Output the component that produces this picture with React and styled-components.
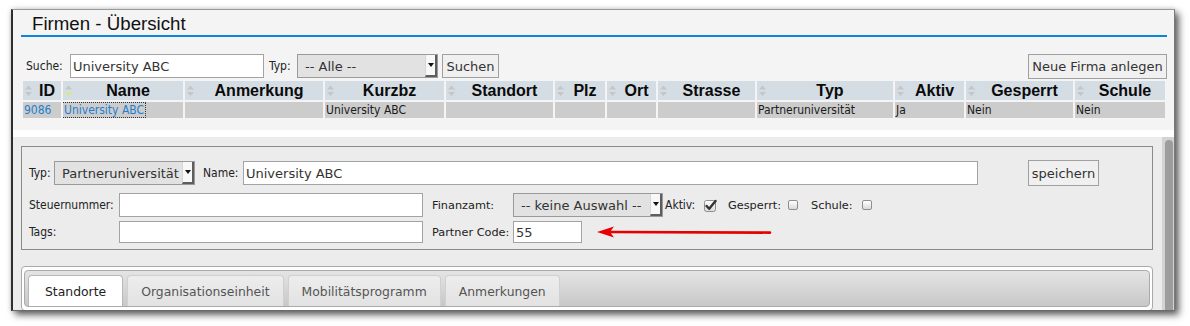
import React from "react";
import styled, { createGlobalStyle } from "styled-components";

const Global = createGlobalStyle`
  html, body { margin: 0; padding: 0; background: #fff; }
  body { font-family: "DejaVu Sans", sans-serif; }
  * { box-sizing: border-box; }
`;

const Stage = styled.div`
  width: 1190px;
  height: 326px;
  padding: 9px 0 0 11px;
  overflow: hidden;
  background: #fff;
`;

const Window = styled.div`
  width: 1164px;
  height: 302px;
  border-top: 1px solid #9a9a9a;
  border-left: 2px solid #2e2e2e;
  border-right: 1px solid #7a7a7a;
  border-bottom: 1px solid #6a6a6a;
  box-shadow: 4px 4px 7px rgba(0, 0, 0, 0.6), 0 0 5px rgba(0, 0, 0, 0.18);
  display: flex;
  flex-direction: column;
  background: #fff;
`;

const TopPanel = styled.div`
  height: 120px;
  flex: none;
  background: #f4f4f4;
  padding: 3px 7px 0 8px;
`;

const Title = styled.h1`
  margin: 0;
  font-family: "Liberation Sans", Arial, sans-serif;
  font-weight: normal;
  font-size: 18.7px;
  line-height: 22px;
  color: #111;
  padding-left: 11px;
  border-bottom: 2px solid #0c86d4;
`;

const SearchRow = styled.div`
  display: flex;
  align-items: center;
  height: 26px;
  margin-top: 16px;
  padding-left: 5px;
`;

const Label = styled.span`
  flex: none;
  white-space: nowrap;
  color: #222;
  font-family: ${(p) =>
    p.$wide
      ? '"DejaVu Sans", sans-serif'
      : '"DejaVu Sans Condensed", "DejaVu Sans", sans-serif'};
  font-stretch: ${(p) => (p.$wide ? "normal" : "condensed")};
  font-size: ${(p) => (p.$wide ? "11.3px" : "12px")};
  width: ${(p) => (p.$w ? `${p.$w}px` : "auto")};
  margin-left: ${(p) => (p.$ml ? `${p.$ml}px` : "0")};
`;

const TextInput = styled.input`
  flex: none;
  width: ${(p) => p.$w}px;
  height: ${(p) => p.$h || 24}px;
  margin-left: ${(p) => (p.$ml ? `${p.$ml}px` : "0")};
  border: 1px solid #a3a3a3;
  background: #fff;
  padding: 0 2px;
  font-family: "DejaVu Sans", sans-serif;
  font-size: 13px;
  color: #333;
  outline: none;
`;

const SelectBox = styled.div`
  flex: none;
  display: flex;
  align-items: stretch;
  width: ${(p) => p.$w}px;
  height: 24px;
  margin-left: ${(p) => (p.$ml ? `${p.$ml}px` : "0")};
  border: 1px solid #9a9a9a;
  background: #e2e2e2;
`;

const SelectText = styled.span`
  flex: 1;
  display: flex;
  align-items: center;
  padding-left: 7px;
  font-family: "DejaVu Sans", sans-serif;
  font-size: 13px;
  color: #333;
  white-space: nowrap;
  overflow: hidden;
`;

const ArrowBox = styled.span`
  flex: none;
  width: 12px;
  background: #f8f8f8;
  border-left: 1px solid #d6d6d6;
  border-right: 2px solid #5e5e5e;
  border-bottom: 2px solid #5e5e5e;
  display: flex;
  justify-content: center;
  padding-top: 8px;
  &::after {
    content: "";
    width: 0;
    height: 0;
    border-left: 3px solid transparent;
    border-right: 3px solid transparent;
    border-top: 4px solid #111;
  }
`;

const Button = styled.button`
  flex: none;
  width: ${(p) => p.$w}px;
  height: ${(p) => p.$h || 24}px;
  margin-left: ${(p) => (p.$ml === "auto" ? "auto" : p.$ml ? `${p.$ml}px` : "0")};
  border: 1px solid #a0a0a0;
  background: #f0f0f0;
  padding: 0;
  font-family: "DejaVu Sans", sans-serif;
  font-size: 13px;
  color: #333;
  white-space: nowrap;
`;

const Grid = styled.div`
  display: grid;
  grid-template-columns: 38px 120px 138px 119px 107px 50px 49px 97px 136px 69px 107px 90px;
  column-gap: 2px;
  row-gap: 2px;
  margin: 2px 0 0 2px;
`;

const HeadCell = styled.div`
  height: 19px;
  background: #d4dce4;
  display: flex;
  align-items: center;
  padding-left: 1px;
  overflow: hidden;
`;

const HeadText = styled.span`
  flex: 1;
  text-align: center;
  font-family: "Liberation Sans", Arial, sans-serif;
  font-weight: bold;
  font-size: 16px;
  line-height: 19px;
  color: #0a0a0a;
  white-space: nowrap;
`;

const Cell = styled.div`
  height: 16px;
  background: #cccccc;
  padding-left: 1px;
  font-family: "DejaVu Sans Condensed", "DejaVu Sans", sans-serif;
  font-stretch: condensed;
  font-size: 12px;
  line-height: 16px;
  color: ${(p) => (p.$link ? "#1f7fcf" : "#1a1a1a")};
  white-space: nowrap;
  overflow: hidden;
`;

const FocusLink = styled.span`
  display: inline-block;
  height: 16px;
  line-height: 14px;
  margin-left: -2px;
  padding: 0 1px;
  border: 1px dotted #333;
  color: #1f7fcf;
`;

const Divider = styled.div`
  height: 7px;
  flex: none;
  background: #fff;
`;

const Lower = styled.div`
  flex: 1;
  min-height: 0;
  display: flex;
  background: #ececec;
  overflow: hidden;
`;

const Content = styled.div`
  flex: 1;
  min-width: 0;
  padding: 9px 9px 0 8px;
  overflow: hidden;
`;

const Scrollbar = styled.div`
  flex: none;
  width: 12px;
  background: #d3d3d3;
  padding: 3px 1px 0 3px;
`;

const Thumb = styled.div`
  height: 220px;
  background: #9d9d9d;
  border-radius: 4px 4px 0 0;
`;

const Fieldset = styled.div`
  border: 1px solid #8a8a8a;
  padding: 13px 0 6px 7px;
  display: flex;
  flex-direction: column;
`;

const FormRow = styled.div`
  display: flex;
  align-items: center;
  height: ${(p) => p.$h}px;
  margin-top: ${(p) => p.$mt || 0}px;
`;

const UncheckedBox = styled.span`
  flex: none;
  width: 10px;
  height: 10px;
  margin-left: ${(p) => p.$ml || 0}px;
  border: 1px solid #8e8e8e;
  border-radius: 2px;
  background: linear-gradient(#ffffff, #d9d9d9);
`;

const CheckSvg = styled.svg`
  flex: none;
  margin-left: ${(p) => p.$ml || 0}px;
`;

const ArrowSvg = styled.svg`
  flex: none;
  margin-left: 15px;
`;

const TabsWrap = styled.div`
  margin-top: 16px;
  border: 1px solid #aaaaaa;
  border-radius: 4px;
  background: #fff;
  padding: 3px 2px;
`;

const TabBar = styled.div`
  display: flex;
  align-items: flex-end;
  gap: 4px;
  height: 37px;
  padding: 0 3px;
  border: 1px solid #aaaaaa;
  border-radius: 4px;
  background: linear-gradient(#e4e4e4, #c8c8c8);
`;

const Tab = styled.div`
  height: 31px;
  display: flex;
  align-items: center;
  padding: 0 ${(p) => (p.$active ? 16 : 13)}px;
  border: 1px solid ${(p) => (p.$active ? "#b8b8b8" : "#d0d0d0")};
  border-bottom: 0;
  border-radius: 4px 4px 0 0;
  background: ${(p) => (p.$active ? "#fff" : "linear-gradient(#ededed, #e2e2e2)")};
  font-family: "DejaVu Sans", sans-serif;
  font-size: 12.4px;
  color: ${(p) => (p.$active ? "#222" : "#555")};
  white-space: nowrap;
`;

const SortIcon = ({ active }) => (
  <svg width="9" height="14" viewBox="0 0 9 14" style={{ flex: "none" }}>
    <path d="M4.5 1.5 L8 5.5 L1 5.5 Z" fill="#c6c6c6" />
    <path d="M1 8 L8 8 L4.5 12 Z" fill={active ? "#d4e88c" : "#c6c6c6"} />
  </svg>
);

const Checked = ({ ml }) => (
  <CheckSvg $ml={ml} width="13" height="13" viewBox="0 0 13 13">
    <defs>
      <linearGradient id="cbg" x1="0" y1="0" x2="0" y2="1">
        <stop offset="0" stopColor="#ffffff" />
        <stop offset="1" stopColor="#dadada" />
      </linearGradient>
    </defs>
    <rect x="0.5" y="1.5" width="11" height="11" rx="2" fill="url(#cbg)" stroke="#8e8e8e" />
    <path d="M2.6 7 L5.2 9.8 L11.5 2" fill="none" stroke="#333" strokeWidth="2.4" strokeLinecap="round" strokeLinejoin="round" />
  </CheckSvg>
);

const heads = [
  "ID", "Name", "Anmerkung", "Kurzbz", "Standort", "Plz", "Ort",
  "Strasse", "Typ", "Aktiv", "Gesperrt", "Schule",
];

const row = [
  "", "", "", "University ABC", "", "", "", "", "Partneruniversität", "Ja", "Nein", "Nein",
];

const tabs = ["Standorte", "Organisationseinheit", "Mobilitätsprogramm", "Anmerkungen"];

export default function App() {
  return (
    <>
      <Global />
      <Stage>
        <Window>
          <TopPanel>
            <Title>Firmen - Übersicht</Title>
            <SearchRow>
              <Label $w={44}>Suche:</Label>
              <TextInput $w={194} defaultValue="University ABC" />
              <Label $w={28} $ml={5}>Typ:</Label>
              <SelectBox $w={141}>
                <SelectText>-- Alle --</SelectText>
                <ArrowBox />
              </SelectBox>
              <Button $w={57} $ml={4}>Suchen</Button>
              <Button $w={139} $h={25} $ml="auto">Neue Firma anlegen</Button>
            </SearchRow>
            <Grid>
              {heads.map((h, i) => (
                <HeadCell key={h}>
                  <SortIcon active={i === 1} />
                  <HeadText>{h}</HeadText>
                </HeadCell>
              ))}
              {row.map((v, i) => {
                if (i === 0) return <Cell key={i} $link>9086</Cell>;
                if (i === 1)
                  return (
                    <Cell key={i}>
                      <FocusLink>University ABC</FocusLink>
                    </Cell>
                  );
                return <Cell key={i}>{v}</Cell>;
              })}
            </Grid>
          </TopPanel>
          <Divider />
          <Lower>
            <Content>
              <Fieldset>
                <FormRow $h={26}>
                  <Label $w={25}>Typ:</Label>
                  <SelectBox $w={141}>
                    <SelectText>Partneruniversität</SelectText>
                    <ArrowBox />
                  </SelectBox>
                  <Label $w={40} $ml={8}>Name:</Label>
                  <TextInput $w={735} defaultValue="University ABC" />
                  <Button $w={71} $h={26} $ml={50}>speichern</Button>
                </FormRow>
                <FormRow $h={24} $mt={7}>
                  <Label $w={90}>Steuernummer:</Label>
                  <TextInput $w={304} $h={24} defaultValue="" />
                  <Label $wide $w={81} $ml={9}>Finanzamt:</Label>
                  <SelectBox $w={150}>
                    <SelectText>-- keine Auswahl --</SelectText>
                    <ArrowBox />
                  </SelectBox>
                  <Label $w={39} $ml={2}>Aktiv:</Label>
                  <Checked />
                  <Label $wide $w={60} $ml={11}>Gesperrt:</Label>
                  <UncheckedBox />
                  <Label $wide $w={51} $ml={13}>Schule:</Label>
                  <UncheckedBox />
                </FormRow>
                <FormRow $h={22} $mt={4}>
                  <Label $w={90}>Tags:</Label>
                  <TextInput $w={304} $h={22} defaultValue="" />
                  <Label $wide $w={81} $ml={9}>Partner Code:</Label>
                  <TextInput $w={69} $h={22} defaultValue="55" />
                  <ArrowSvg width="175" height="12" viewBox="0 0 175 12">
                    <path d="M0 6 L17 0.5 L13 6 L17 11.5 Z" fill="#e80000" />
                    <path d="M12 6 L173 6.6" stroke="#e80000" strokeWidth="2.6" strokeLinecap="round" />
                  </ArrowSvg>
                </FormRow>
              </Fieldset>
              <TabsWrap>
                <TabBar>
                  {tabs.map((t, i) => (
                    <Tab key={t} $active={i === 0}>{t}</Tab>
                  ))}
                </TabBar>
              </TabsWrap>
            </Content>
            <Scrollbar>
              <Thumb />
            </Scrollbar>
          </Lower>
        </Window>
      </Stage>
    </>
  );
}
